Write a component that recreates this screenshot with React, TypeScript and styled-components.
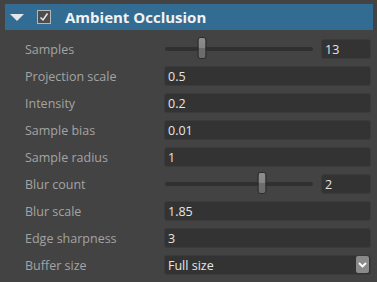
import React from "react";
import styled, { createGlobalStyle } from "styled-components";

const Global = createGlobalStyle`
  html, body { margin: 0; padding: 0; background: #434343; }
  body { font-family: "Open Sans", "Noto Sans", sans-serif; }
`;

const Panel = styled.div`
  width: 377px;
  height: 282px;
  box-sizing: border-box;
  padding: 4px 4px 0 5px;
  background: #434343;
`;

const Header = styled.div`
  height: 26px;
  background: #326c93;
  display: flex;
  align-items: center;
  padding-left: 5px;
  margin-bottom: 9px;
`;

const Arrow = styled.div`
  width: 0;
  height: 0;
  border-left: 7.5px solid transparent;
  border-right: 7.5px solid transparent;
  border-top: 7px solid #e6e6e6;
  margin-top: 1px;
`;

const CheckBox = styled.div`
  width: 12px;
  height: 12px;
  margin-left: 13px;
  border: 1px solid #b8b8b8;
  background: #4e4e4e;
  display: flex;
  align-items: center;
  justify-content: center;
`;

const Title = styled.div`
  margin-left: 14px;
  color: #f2f2f2;
  font-weight: 700;
  font-size: 15px;
`;

const Rows = styled.div`
  display: flex;
  flex-direction: column;
  gap: 7px;
  padding-right: 2px;
`;

const Row = styled.div`
  display: grid;
  grid-template-columns: 139px 1fr;
  align-items: center;
  height: 20px;
  padding-left: 20px;
`;

const Label = styled.div`
  color: #a3a3a3;
  font-size: 12.5px;
`;

const Field = styled.div`
  height: 20px;
  box-sizing: border-box;
  background: #333333;
  border: 1px solid #3b3b3b;
  border-radius: 3px;
  color: #e6e6e6;
  font-size: 12.5px;
  display: flex;
  align-items: center;
  padding-left: 3px;
  position: relative;
`;

const SliderWrap = styled.div`
  display: grid;
  grid-template-columns: 1fr 50px;
  gap: 8px;
  align-items: center;
`;

const Track = styled.div`
  position: relative;
  height: 4px;
  margin-left: 1px;
  background: #303030;
  border-radius: 2px;
`;

const Thumb = styled.div`
  position: absolute;
  top: -10px;
  width: 9px;
  height: 22px;
  box-sizing: border-box;
  border: 1px solid #2a2a2a;
  border-radius: 3px;
  background: linear-gradient(#8e8e8e 0%, #858585 50%, #6c6c6c 50%, #6c6c6c 100%);
  transform: translateX(-50%);
`;

const DropButton = styled.div`
  position: absolute;
  right: 1px;
  top: 0px;
  width: 13px;
  height: 17px;
  background: #8a8a8a;
  border-radius: 2px;
  display: flex;
  align-items: center;
  justify-content: center;
`;

type RowDef =
  | { label: string; kind: "text"; value: string }
  | { label: string; kind: "slider"; value: string; frac: number }
  | { label: string; kind: "select"; value: string };

const rows: RowDef[] = [
  { label: "Samples", kind: "slider", value: "13", frac: 0.25 },
  { label: "Projection scale", kind: "text", value: "0.5" },
  { label: "Intensity", kind: "text", value: "0.2" },
  { label: "Sample bias", kind: "text", value: "0.01" },
  { label: "Sample radius", kind: "text", value: "1" },
  { label: "Blur count", kind: "slider", value: "2", frac: 0.655 },
  { label: "Blur scale", kind: "text", value: "1.85" },
  { label: "Edge sharpness", kind: "text", value: "3" },
  { label: "Buffer size", kind: "select", value: "Full size" },
];

export default function App() {
  return (
    <>
      <Global />
      <Panel>
        <Header>
          <Arrow />
          <CheckBox>
            <svg width="10" height="10" viewBox="0 0 10 10">
              <path d="M1.5 5.5 L4 8 L8.5 1.5" fill="none" stroke="#f0f0f0" strokeWidth="1.4" />
            </svg>
          </CheckBox>
          <Title>Ambient Occlusion</Title>
        </Header>
        <Rows>
          {rows.map((r) => (
            <Row key={r.label}>
              <Label>{r.label}</Label>
              {r.kind === "slider" ? (
                <SliderWrap>
                  <Track>
                    <Thumb style={{ left: `${r.frac * 100}%` }} />
                  </Track>
                  <Field>{r.value}</Field>
                </SliderWrap>
              ) : r.kind === "select" ? (
                <Field>
                  {r.value}
                  <DropButton>
                    <svg width="9" height="6" viewBox="0 0 9 6">
                      <path d="M1 1 L4.5 4.5 L8 1" fill="none" stroke="#ffffff" strokeWidth="1.8" />
                    </svg>
                  </DropButton>
                </Field>
              ) : (
                <Field>{r.value}</Field>
              )}
            </Row>
          ))}
        </Rows>
      </Panel>
    </>
  );
}
